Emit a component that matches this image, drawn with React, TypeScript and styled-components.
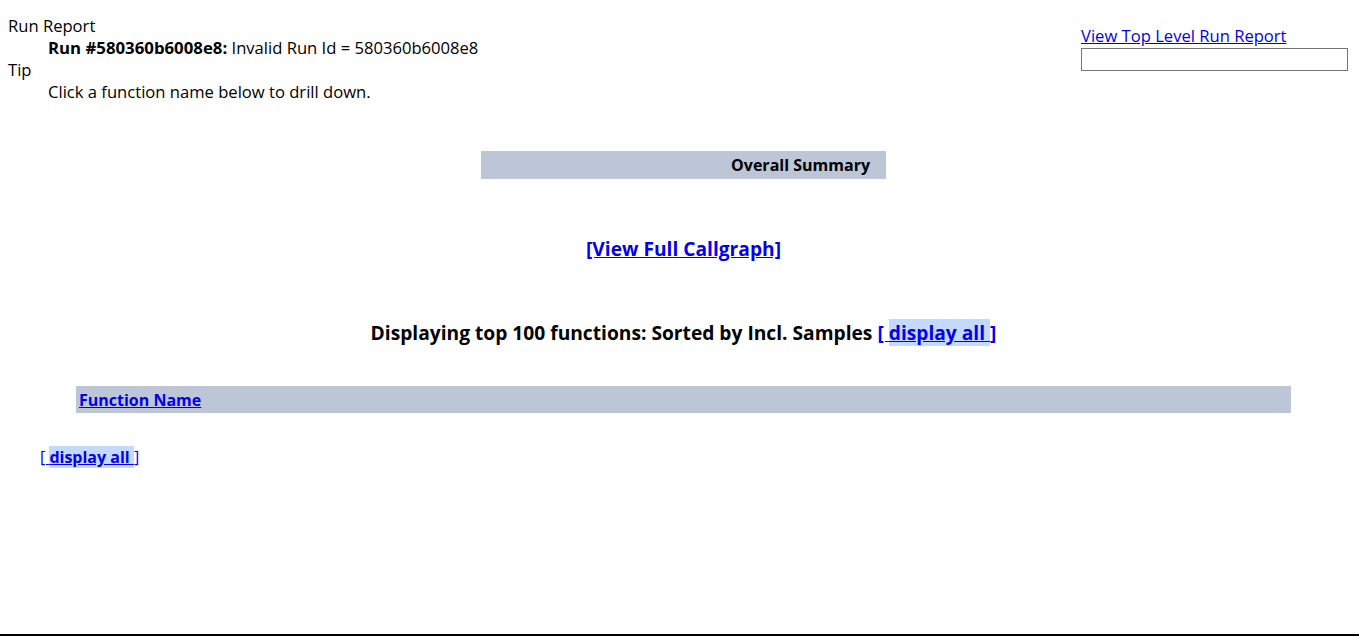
import styled, { createGlobalStyle } from 'styled-components';

const GlobalStyle = createGlobalStyle`
  html, body {
    margin: 0;
    padding: 0;
    background: #fff;
  }
  body {
    font-family: 'Open Sans', 'Noto Sans', 'Liberation Sans', sans-serif;
    font-size: 16.6px;
    color: #000;
  }
`;

const Page = styled.div`
  min-height: 636px;
  box-sizing: border-box;
  padding: 15px 8px 0 8px;
  border-bottom: 2px solid #000;
  display: flex;
  flex-direction: column;
`;

const Header = styled.div`
  display: flex;
  justify-content: space-between;
  align-items: flex-start;
`;

const InfoList = styled.dl`
  margin: 0;
  line-height: 22px;
`;

const Term = styled.dt`
  margin: 0;
`;

const Detail = styled.dd`
  margin: 0 0 0 40px;

  b {
    font-size: 16.8px;
  }
`;

const Side = styled.div`
  display: flex;
  flex-direction: column;
  align-items: flex-start;
  padding-top: 10px;
  margin-right: 3px;
`;

const Link = styled.a`
  color: #0000ee;
  text-decoration: underline;
  cursor: pointer;
`;

const SideLink = styled(Link)`
  font-size: 16.6px;
  line-height: 22px;
`;

const SearchBox = styled.input`
  width: 267px;
  height: 23px;
  box-sizing: border-box;
  margin: 1px 0 0 0;
  border: 1px solid #767676;
  font-family: inherit;
  font-size: 14px;
  padding: 1px 4px;
`;

const SummaryBar = styled.div`
  align-self: center;
  width: 405px;
  height: 28px;
  margin: 48px 0 0 8px;
  background: #bdc6d6;
  display: flex;
  align-items: center;
  justify-content: flex-end;
  padding-right: 16px;
  box-sizing: border-box;
  font-weight: 700;
  font-size: 16px;
`;

const Centered = styled.div<{ $size: number; $top: number }>`
  text-align: center;
  font-weight: 700;
  font-size: ${p => p.$size}px;
  margin-top: ${p => p.$top}px;
  padding-left: 8px;
  line-height: 26px;
`;

const Highlight = styled.span`
  background: #c4d9ff;
`;

const TableHead = styled.div`
  margin: 40px 60px 0 68px;
  height: 27px;
  background: #bdc6d6;
  display: flex;
  align-items: center;
  padding-left: 3px;
`;

const HeadLink = styled(Link)`
  font-weight: 700;
  font-size: 16px;
`;

const FooterLinks = styled.div`
  margin: 33px 0 0 32px;
  font-size: 16px;
  line-height: 22px;
`;

const BoldHighlight = styled(Highlight)`
  font-weight: 700;
`;

export default function App() {
  return (
    <>
      <GlobalStyle />
      <Page>
        <Header>
          <InfoList>
            <Term>Run Report</Term>
            <Detail>
              <b>Run #580360b6008e8:</b> Invalid Run Id = 580360b6008e8
            </Detail>
            <Term>Tip</Term>
            <Detail>Click a function name below to drill down.</Detail>
          </InfoList>
          <Side>
            <SideLink>View Top Level Run Report</SideLink>
            <SearchBox type="text" />
          </Side>
        </Header>

        <SummaryBar>Overall Summary</SummaryBar>

        <Centered $size={19.2} $top={57}>
          <Link>[View Full Callgraph]</Link>
        </Centered>

        <Centered $size={19.2} $top={58}>
          Displaying top 100 functions: Sorted by Incl. Samples{' '}
          <Link>
            [ <Highlight>display all </Highlight>]
          </Link>
        </Centered>

        <TableHead>
          <HeadLink>Function Name</HeadLink>
        </TableHead>

        <FooterLinks>
          <Link>
            [ <BoldHighlight>display all </BoldHighlight>]
          </Link>
        </FooterLinks>
      </Page>
    </>
  );
}
